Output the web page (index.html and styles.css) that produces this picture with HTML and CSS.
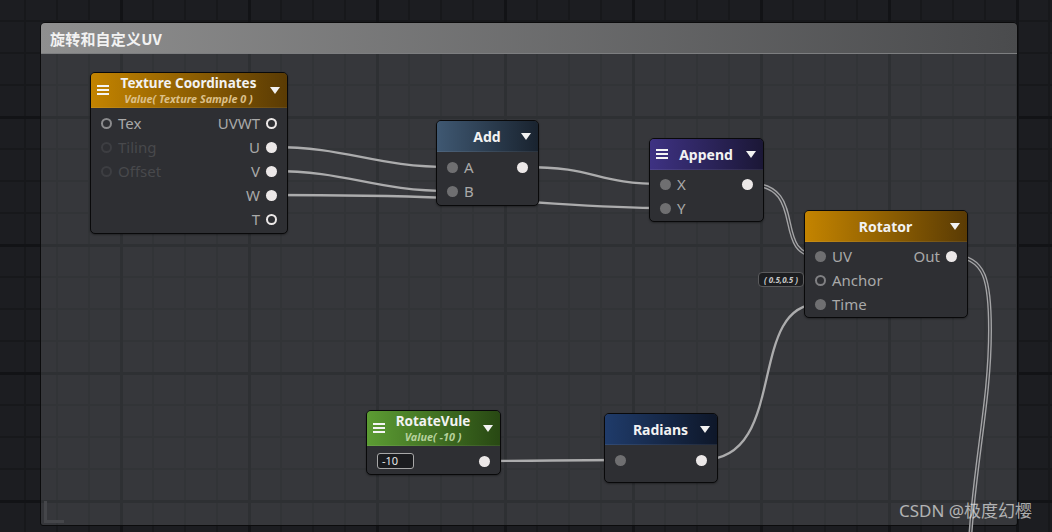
FILE: index.html
```html
<!DOCTYPE html>
<html>
<head>
<meta charset="utf-8">
<title>旋转和自定义UV</title>
<link rel="stylesheet" href="styles.css">
</head>
<body>
<div class="canvas">
  <div class="group">
    <div class="group-head">旋转和自定义UV</div>
    <div class="group-body"><span class="resize"></span></div>
  </div>

  <svg class="wires" width="1052" height="532" viewBox="0 0 1052 532">
    <g class="w-single">
      <path d="M272 147 C 350 147, 372 167, 452 167"/>
      <path d="M272 171 C 350 171, 372 191, 452 191"/>
      <path d="M272 195 C 520 195, 560 208, 665 208"/>
      <path d="M523 167 C 600 167, 592 184, 665 184"/>
      <path d="M485 461 C 550 461, 555 460, 620 460"/>
      <path d="M702 460 C 790 460, 745 304, 819 304"/>
    </g>
    <g class="w-outer">
      <path d="M748 184 C 810 184, 770 256, 819 256"/>
      <path d="M952 256 C 986 256, 990 282, 990 330 C 990 400, 975 460, 970 540"/>
    </g>
    <g class="w-inner">
      <path d="M748 184 C 810 184, 770 256, 819 256"/>
      <path d="M952 256 C 986 256, 990 282, 990 330 C 990 400, 975 460, 970 540"/>
    </g>
  </svg>

  <!-- Texture Coordinates -->
  <div class="node n-tex">
    <div class="node-head orange tall">
      <span class="menu"><i></i><i></i><i></i></span>
      <div class="title"><b>Texture Coordinates</b><em class="sub-orange">Value( Texture Sample 0 )</em></div>
      <span class="caret"></span>
    </div>
    <div class="node-body">
      <div class="row"><span class="port ring"></span><span class="lbl">Tex</span><span class="sp"></span><span class="lbl r">UVWT</span><span class="port ring white"></span></div>
      <div class="row"><span class="port ring off"></span><span class="lbl off">Tiling</span><span class="sp"></span><span class="lbl r">U</span><span class="port white"></span></div>
      <div class="row"><span class="port ring off"></span><span class="lbl off">Offset</span><span class="sp"></span><span class="lbl r">V</span><span class="port white"></span></div>
      <div class="row"><span class="sp"></span><span class="lbl r">W</span><span class="port white"></span></div>
      <div class="row"><span class="sp"></span><span class="lbl r">T</span><span class="port ring white"></span></div>
    </div>
  </div>

  <!-- Add -->
  <div class="node n-add">
    <div class="node-head steel">
      <span class="slot"></span>
      <div class="title"><b class="big">Add</b></div>
      <span class="caret"></span>
    </div>
    <div class="node-body">
      <div class="row"><span class="port grey"></span><span class="lbl">A</span><span class="sp"></span><span class="port white"></span></div>
      <div class="row"><span class="port grey"></span><span class="lbl">B</span><span class="sp"></span></div>
    </div>
  </div>

  <!-- Append -->
  <div class="node n-append">
    <div class="node-head purple">
      <span class="menu"><i></i><i></i><i></i></span>
      <div class="title"><b class="big">Append</b></div>
      <span class="caret"></span>
    </div>
    <div class="node-body pt2">
      <div class="row"><span class="port grey"></span><span class="lbl">X</span><span class="sp"></span><span class="port white"></span></div>
      <div class="row"><span class="port grey"></span><span class="lbl">Y</span><span class="sp"></span></div>
    </div>
  </div>

  <!-- Rotator -->
  <div class="node n-rot">
    <div class="node-head orange">
      <span class="slot"></span>
      <div class="title"><b class="big">Rotator</b></div>
      <span class="caret"></span>
    </div>
    <div class="node-body pt2">
      <div class="row"><span class="port grey"></span><span class="lbl">UV</span><span class="sp"></span><span class="lbl r">Out</span><span class="port white"></span></div>
      <div class="row"><span class="port ring dim"></span><span class="lbl">Anchor</span><span class="sp"></span></div>
      <div class="row"><span class="port grey"></span><span class="lbl">Time</span><span class="sp"></span></div>
    </div>
  </div>
  <div class="side-input">( 0.5,0.5 )</div>

  <!-- RotateVule -->
  <div class="node n-vule">
    <div class="node-head green tall">
      <span class="menu"><i></i><i></i><i></i></span>
      <div class="title"><b>RotateVule</b><em class="sub-green">Value( -10 )</em></div>
      <span class="caret"></span>
    </div>
    <div class="node-body pb1">
      <div class="row"><span class="field">-10</span><span class="sp"></span><span class="port white"></span></div>
    </div>
  </div>

  <!-- Radians -->
  <div class="node n-rad">
    <div class="node-head navy">
      <span class="slot"></span>
      <div class="title"><b class="big">Radians</b></div>
      <span class="caret"></span>
    </div>
    <div class="node-body pb10">
      <div class="row"><span class="port grey"></span><span class="sp"></span><span class="port white"></span></div>
    </div>
  </div>

  <div class="watermark">CSDN @极度幻樱</div>
</div>
</body>
</html>
```

FILE: styles.css
```css
* { box-sizing: border-box; }

html, body {
  margin: 0;
  padding: 0;
  background: #1c1d21;
}

body {
  font-family: "Noto Sans", "Noto Sans CJK SC", sans-serif;
}

.canvas {
  position: relative;
  width: 1052px;
  height: 532px;
  overflow: hidden;
  background-color: #1c1d21;
  background-image:
    linear-gradient(to right, #121316 3px, transparent 3px),
    linear-gradient(to bottom, #121316 3px, transparent 3px),
    linear-gradient(to right, #17181b 2px, transparent 2px),
    linear-gradient(to bottom, #17181b 2px, transparent 2px);
  background-size: 128px 128px, 128px 128px, 32px 32px, 32px 32px;
  background-position: 120px 0, 0 116px, 24px 0, 0 20px;
}

/* ---------- group frame ---------- */
.group {
  position: absolute;
  left: 40px;
  top: 22px;
  width: 978px;
  height: 504px;
  display: flex;
  flex-direction: column;
  border: 1px solid #0b0b0c;
  border-radius: 5px 5px 3px 3px;
  overflow: hidden;
}

.group-head {
  height: 31px;
  flex: none;
  padding: 0 9px;
  display: flex;
  align-items: center;
  background: linear-gradient(to right, #8f8f8f, #4a4b4d);
  border-bottom: 1px solid #7d7e80;
  color: #f2f2f2;
  font-family: "Noto Sans CJK SC", "Noto Sans", sans-serif;
  font-weight: 700;
  font-size: 15px;
  letter-spacing: 0.2px;
}

.group-body {
  flex: 1;
  position: relative;
  background: rgba(132, 134, 140, 0.25);
}

.resize {
  position: absolute;
  left: 3px;
  bottom: 2px;
  width: 20px;
  height: 22px;
  border-left: 3px solid #45464a;
  border-bottom: 3px solid #45464a;
}

/* ---------- wires ---------- */
.wires {
  position: absolute;
  left: 0;
  top: 0;
}

.wires path { fill: none; }

.w-single path {
  stroke: #acacad;
  stroke-width: 2.3;
}

.w-outer path {
  stroke: #a4a4a6;
  stroke-width: 4;
}

.w-inner path {
  stroke: #3a3b3f;
  stroke-width: 1.3;
}

/* ---------- nodes ---------- */
.node {
  position: absolute;
  border: 1px solid #09090a;
  border-radius: 5px;
  background: #2e2f33;
  overflow: hidden;
  box-shadow: 0 1px 2px rgba(0, 0, 0, 0.35);
}

.n-tex    { left: 90px;  top: 72px;  width: 198px; }
.n-add    { left: 436px; top: 120px; width: 103px; }
.n-append { left: 649px; top: 138px; width: 115px; }
.n-rot    { left: 804px; top: 210px; width: 164px; }
.n-vule   { left: 366px; top: 410px; width: 135px; }
.n-rad    { left: 604px; top: 413px; width: 114px; }

.node-head {
  height: 31px;
  display: grid;
  grid-template-columns: 14px 1fr 14px;
  align-items: center;
  padding: 0 7px 0 6px;
  border-bottom: 1px solid rgba(255, 255, 255, 0.08);
}

.node-head.tall { height: 35px; }

.orange { background: linear-gradient(to right, #c48400, #5a3b04); }
.steel  { background: linear-gradient(to right, #3f5872, #19232f); }
.purple { background: linear-gradient(to right, #3e3283, #1b1736); }
.green  { background: linear-gradient(to right, #5c9c33, #284813); }
.navy   { background: linear-gradient(to right, #1f3b6a, #0e1729); }

.menu {
  display: flex;
  flex-direction: column;
  gap: 2px;
  width: 12px;
}

.menu i {
  display: block;
  height: 2px;
  background: #f4f4f4;
}

.slot { display: block; }

.caret {
  justify-self: end;
  width: 0;
  height: 0;
  border-left: 5px solid transparent;
  border-right: 5px solid transparent;
  border-top: 7px solid #f2f2f2;
}

.title {
  display: flex;
  flex-direction: column;
  align-items: center;
  text-align: center;
  white-space: nowrap;
}

.title b {
  display: block;
  color: #f2f2f2;
  font-size: 13.5px;
  line-height: 18px;
  height: 18px;
  font-weight: 700;
}

.title b.big {
  font-size: 14px;
  line-height: 19px;
  height: 19px;
}

.title em {
  display: block;
  font-size: 10.8px;
  line-height: 14px;
  height: 14px;
  font-weight: 700;
  font-style: italic;
}

.sub-orange { color: #dcc08a; }
.sub-green  { color: #b6d19c; }

.node-body {
  padding: 3px 0 2px;
}

.node-body.pt2  { padding-top: 2px; padding-bottom: 1px; }
.node-body.pb1  { padding-bottom: 1px; }
.node-body.pb10 { padding-bottom: 10px; }

.row {
  height: 24px;
  display: flex;
  align-items: center;
  padding: 0 10px;
}

.sp { flex: 1; }

.lbl {
  font-size: 15px;
  line-height: 24px;
  color: #a9a9a9;
  margin-left: 6px;
}

.lbl.r {
  margin-left: 0;
  margin-right: 6px;
}

.lbl.off { color: #48494c; }

.port {
  flex: none;
  width: 11px;
  height: 11px;
  border-radius: 50%;
}

.port.grey  { background: #6f6f71; }
.port.white { background: #ece8e8; }

.port.ring {
  background: transparent;
  border: 2px solid #8b8b8d;
}

.port.ring.white {
  background: transparent;
  border: 2px solid #ece8e8;
}

.port.ring.off { border-color: #3d3e42; }
.port.ring.dim { border-color: #808083; }

.field {
  width: 37px;
  height: 16px;
  border: 1px solid #a8a8a8;
  border-radius: 3px;
  background: #1b1c1f;
  color: #e6e6e6;
  font-size: 11px;
  line-height: 14px;
  padding-left: 4px;
}

.side-input {
  position: absolute;
  left: 758px;
  top: 272px;
  width: 46px;
  height: 15px;
  border: 1px solid #5a5a5c;
  border-radius: 4px;
  background: #1c1d20;
  color: #c8c8c8;
  font-size: 8px;
  font-weight: 700;
  font-style: italic;
  line-height: 13px;
  text-align: center;
  white-space: nowrap;
}

.watermark {
  position: absolute;
  left: 899px;
  top: 501px;
  font-family: "Noto Sans", "Noto Sans CJK SC", sans-serif;
  font-size: 17px;
  line-height: 20px;
  color: rgba(228, 228, 228, 0.72);
  white-space: nowrap;
}
```
